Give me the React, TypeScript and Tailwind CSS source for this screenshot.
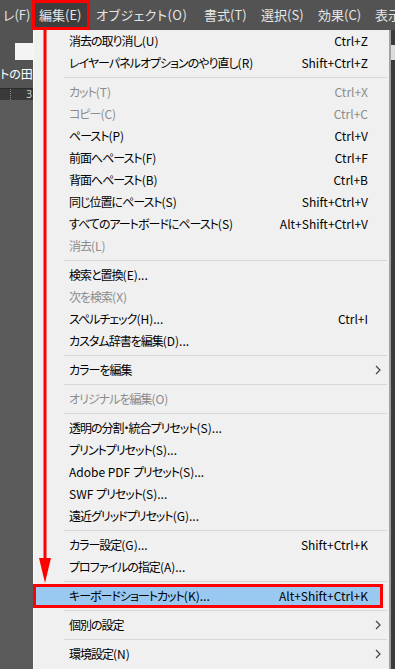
import React from "react";

type Item =
  | { type: "sep" }
  | { type: "item"; label: string; key?: string; disabled?: boolean; sub?: boolean; active?: boolean };

const items: Item[] = [
  { type: "item", label: "消去の取り消し(U)", key: "Ctrl+Z" },
  { type: "item", label: "レイヤーパネルオプションのやり直し(R)", key: "Shift+Ctrl+Z" },
  { type: "sep" },
  { type: "item", label: "カット(T)", key: "Ctrl+X", disabled: true },
  { type: "item", label: "コピー(C)", key: "Ctrl+C", disabled: true },
  { type: "item", label: "ペースト(P)", key: "Ctrl+V" },
  { type: "item", label: "前面へペースト(F)", key: "Ctrl+F" },
  { type: "item", label: "背面へペースト(B)", key: "Ctrl+B" },
  { type: "item", label: "同じ位置にペースト(S)", key: "Shift+Ctrl+V" },
  { type: "item", label: "すべてのアートボードにペースト(S)", key: "Alt+Shift+Ctrl+V" },
  { type: "item", label: "消去(L)", disabled: true },
  { type: "sep" },
  { type: "item", label: "検索と置換(E)..." },
  { type: "item", label: "次を検索(X)", disabled: true },
  { type: "item", label: "スペルチェック(H)...", key: "Ctrl+I" },
  { type: "item", label: "カスタム辞書を編集(D)..." },
  { type: "sep" },
  { type: "item", label: "カラーを編集", sub: true },
  { type: "sep" },
  { type: "item", label: "オリジナルを編集(O)", disabled: true },
  { type: "sep" },
  { type: "item", label: "透明の分割・統合プリセット(S)..." },
  { type: "item", label: "プリントプリセット(S)..." },
  { type: "item", label: "Adobe PDF プリセット(S)..." },
  { type: "item", label: "SWF プリセット(S)..." },
  { type: "item", label: "遠近グリッドプリセット(G)..." },
  { type: "sep" },
  { type: "item", label: "カラー設定(G)...", key: "Shift+Ctrl+K" },
  { type: "item", label: "プロファイルの指定(A)..." },
  { type: "sep" },
  { type: "item", label: "キーボードショートカット(K)...", key: "Alt+Shift+Ctrl+K", active: true },
  { type: "sep" },
  { type: "item", label: "個別の設定", sub: true },
  { type: "sep" },
  { type: "item", label: "環境設定(N)", sub: true },
];

const jp = "[font-family:'Noto_Sans_CJK_JP',sans-serif] [font-feature-settings:'palt']";

// 日本語部分だけ字間を詰める（Meiryo UI 風）
function Label({ text }: { text: string }) {
  const parts = text.split(/([\x20-\x7E]+)/).filter(Boolean);
  return (
    <span className="whitespace-pre">
      {parts.map((p, i) =>
        /^[\x20-\x7E]+$/.test(p) ? (
          <span key={i}>{p}</span>
        ) : (
          <span key={i} className="tracking-[-1px]">{p}</span>
        )
      )}
    </span>
  );
}

function Chevron() {
  return (
    <svg width="6" height="10" viewBox="0 0 6 10" className="-mr-[13px]">
      <path d="M1 1 L5 5 L1 9" fill="none" stroke="#444" strokeWidth="1.2" />
    </svg>
  );
}

function MenuRow({ item }: { item: Extract<Item, { type: "item" }> }) {
  const color = item.disabled ? "text-[#8c8c8c]" : "text-black";
  if (item.active) {
    return (
      <div className={`h-[24px] -my-px -ml-px mr-[6px] border-[3px] border-[#ff0000] bg-[#99c8f0] flex items-center justify-between pl-[33px] pr-[12px] text-[12px] text-black ${jp}`}>
        <Label text={item.label} />
        <span>{item.key}</span>
      </div>
    );
  }
  return (
    <div className={`h-[22px] flex items-center justify-between pl-[35px] pr-[21px] text-[12px] ${color} ${jp}`}>
      <Label text={item.label} />
      {item.key && <span>{item.key}</span>}
      {item.sub && <Chevron />}
    </div>
  );
}

export default function App() {
  const top = ["編集(E)", "オブジェクト(O)", "書式(T)", "選択(S)", "効果(C)", "表示"];
  return (
    <div className="relative w-[395px] h-[669px] overflow-hidden bg-[#535353]">
      {/* メニューバー */}
      <div className={`h-[30px] flex items-center whitespace-nowrap text-[13px] text-[#e6e6e6] ${jp}`}>
        <span className="ml-[3px] w-[29px] shrink-0">レ(F)</span>
        <div className="h-[30px] w-[58px] shrink-0 border-[3px] border-[#ff0000] bg-[#3e3e3e] flex items-center pl-[4px]">
          {top[0]}
        </div>
        <span className="ml-[6px] w-[108px] shrink-0 tracking-[0.5px]">{top[1]}</span>
        <span className="w-[57px] shrink-0">{top[2]}</span>
        <span className="w-[57px] shrink-0">{top[3]}</span>
        <span className="w-[57px] shrink-0">{top[4]}</span>
        <span className="shrink-0">{top[5]}</span>
      </div>

      <div className="flex h-[639px]">
        {/* 左側のキャンバス */}
        <div className="w-[33px] shrink-0 flex flex-col overflow-hidden">
          <div className="h-[13px]" />
          <div className="h-[17px] ml-[15px] bg-[#f4f4f4]" />
          <div className={`h-[28px] flex items-center text-[12px] text-white whitespace-nowrap ${jp}`}>トの田中</div>
          <div className="h-[12px] bg-[#3a3a3a] border-t border-[#2a2a2a] flex items-center justify-end text-[10px] text-[#cfcfcf] pr-[1px]">
            <span className="mr-auto ml-[10px] h-full border-l border-dotted border-[#8a8a8a]" />3
          </div>
          <div className="flex-1 bg-[#5a5a5a]" />
        </div>

        {/* 編集メニュー */}
        <div className="w-[358px] shrink-0 bg-[#f0f0f0] border-l border-[#fafafa] border-r-2 border-r-[#a0a0a0] flex flex-col">
          {items.map((it, i) =>
            it.type === "sep" ? (
              <div key={i} className="h-[7px] flex items-center pl-[30px] pr-[2px]">
                <div className="h-px w-full bg-[#d7d7d7]" />
              </div>
            ) : (
              <MenuRow key={i} item={it} />
            )
          )}
        </div>

        <div className="flex-1 flex flex-col">
          <div className="h-[15px] bg-[#3a3a3a]" />
          <div className="h-[15px] bg-[#dcdcdc]" />
          <div className="flex-1 bg-[#3a3a3a]" />
        </div>
      </div>

      {/* 赤い矢印 */}
      <svg className="absolute left-[38px] top-[30px]" width="16" height="556" viewBox="0 0 16 556">
        <rect x="5.5" y="0" width="3" height="535" fill="#ff0000" />
        <path d="M1 528 L13 528 L7 553 Z" fill="#ff0000" />
      </svg>
    </div>
  );
}
